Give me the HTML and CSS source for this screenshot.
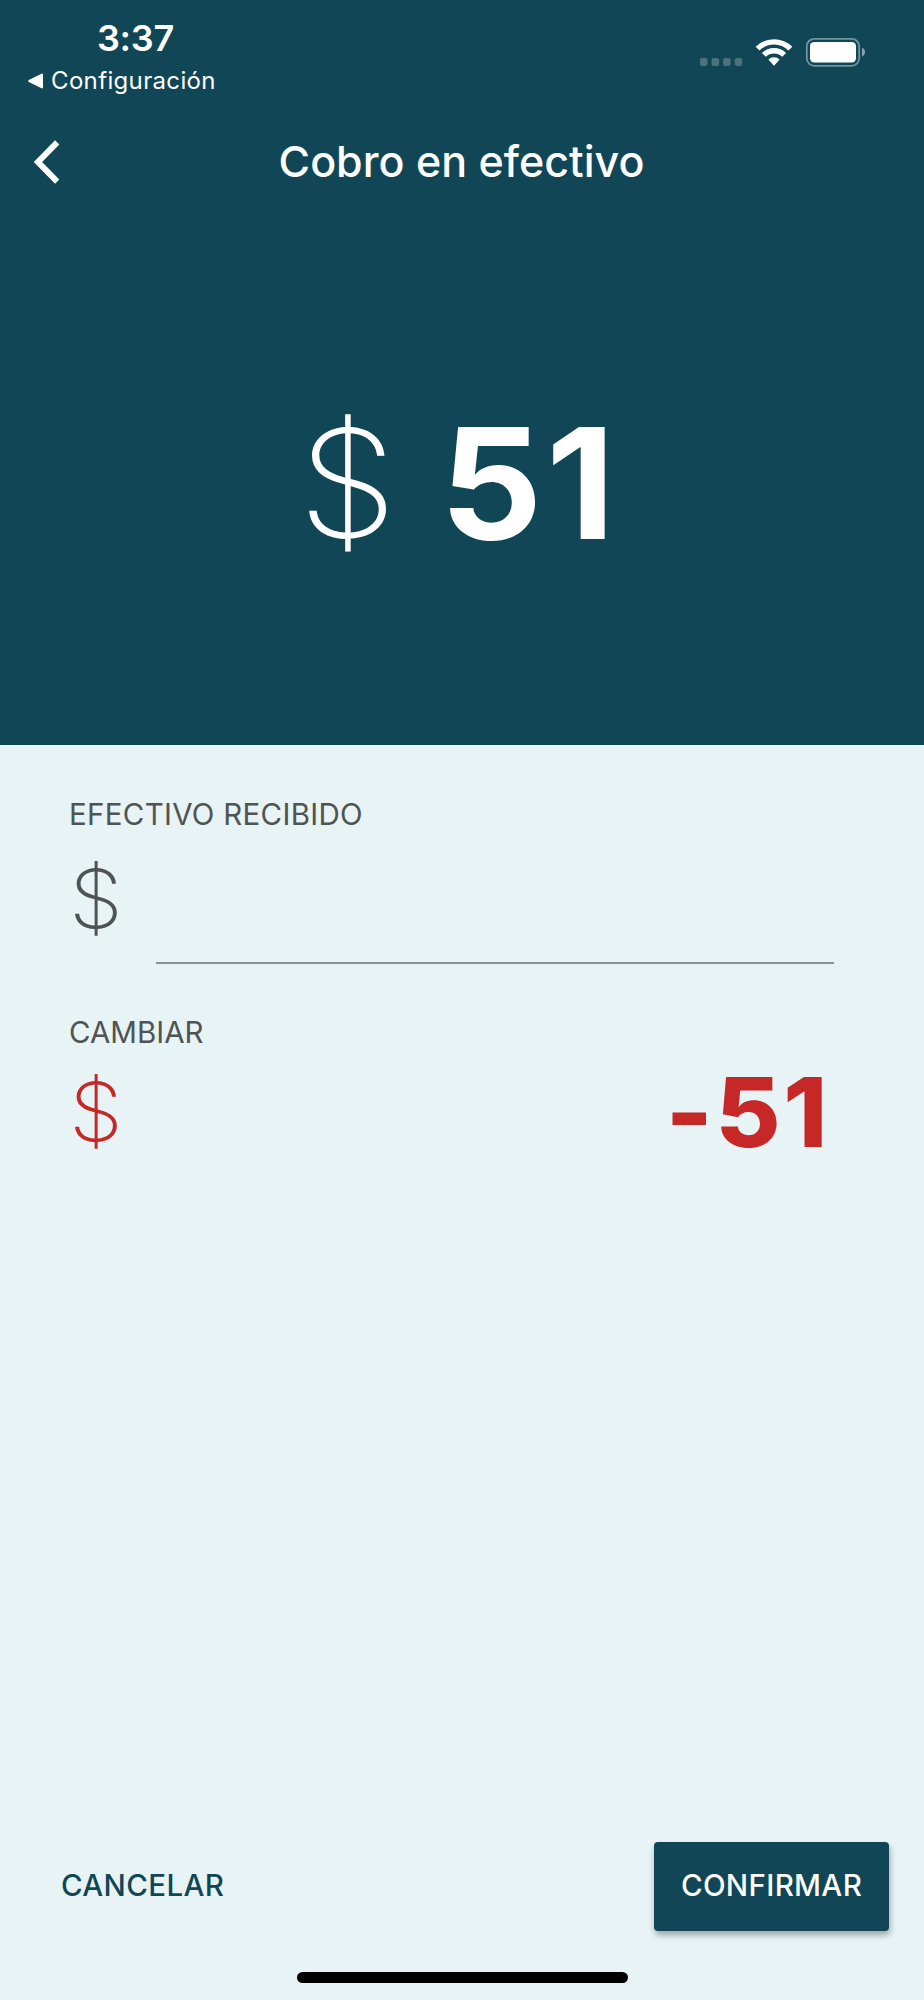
FILE: index.html
```html
<!DOCTYPE html>
<html lang="es">
<head>
  <meta charset="UTF-8" />
  <title>Cobro en efectivo</title>
  <link rel="stylesheet" href="styles.css">
</head>
<body>

<header>
  <div class="status-bar">
    <div class="status-left">
      <span class="time">3:37</span>
      <a class="back-app" href="#">
        <svg width="16" height="16" viewBox="0 0 16 16"><path d="M1.2 8 L14 1.6 V14.4 Z" fill="#fff" stroke="#fff" stroke-width="2" stroke-linejoin="round"/></svg>
        Configuración
      </a>
    </div>
    <!-- signal, wifi, battery -->
    <svg class="status-icons" width="166" height="30" viewBox="700 37 166 30">
      <g fill="#fff" fill-opacity="0.24">
        <rect x="700" y="58" width="7.5" height="8" rx="2.2"/>
        <rect x="711.6" y="58" width="7.5" height="8" rx="2.2"/>
        <rect x="723.1" y="58" width="7.5" height="8" rx="2.2"/>
        <rect x="734.7" y="58" width="7.5" height="8" rx="2.2"/>
      </g>
      <g fill="none" stroke="#fff" stroke-width="5.4">
        <path d="M757.6 48.7 A23 23 0 0 1 790.4 48.7"/>
        <path d="M763.8 54.9 A14.5 14.5 0 0 1 784.2 54.9"/>
      </g>
      <path d="M768.4 59.6 A8 8 0 0 1 779.6 59.6 L774.8 64.9 Q774 65.9 773.2 64.9 Z" fill="#fff"/>
      <rect x="806.8" y="38.8" width="52.4" height="27" rx="7.5" fill="none" stroke="#fff" stroke-opacity="0.42" stroke-width="1.8"/>
      <rect x="810" y="42" width="46" height="20.4" rx="4.2" fill="#fff"/>
      <path d="M862 47.8 C866 49.4 866 55 862 56.6 Z" fill="#fff" fill-opacity="0.5"/>
    </svg>
  </div>

  <div class="app-bar">
    <a class="back" href="#">
      <svg width="28" height="44" viewBox="0 0 28 44"><path d="M23.2 2.4 L4 22 L23.2 41.6" fill="none" stroke="#fff" stroke-width="6"/></svg>
    </a>
    <h1>Cobro en efectivo</h1>
  </div>

  <div class="total">
    <span class="currency">$</span>
    <strong>51</strong>
  </div>
</header>

<main>
  <label for="received">EFECTIVO RECIBIDO</label>
  <div class="row received">
    <span class="currency">$</span>
    <input type="text" id="received">
  </div>

  <div class="label">CAMBIAR</div>
  <div class="row change">
    <span class="currency">$</span>
    <strong>-51</strong>
  </div>
</main>

<footer>
  <div class="actions">
    <button type="button" class="btn-cancel">CANCELAR</button>
    <button type="button" class="btn-confirm">CONFIRMAR</button>
  </div>
  <div class="home-bar"></div>
</footer>

</body>
</html>
```
FILE: styles.css
```css
* {
  box-sizing: border-box;
}
body {
  margin: 0;
  height: 2000px;
  display: flex;
  flex-direction: column;
  font-family: Inter, 'Liberation Sans', sans-serif;
  background: #e7f3f5;
}
header {
  height: 745px;
  background: #104655;
  color: white;
}
.status-bar {
  height: 106px;
  padding: 18px 58px 0 28px;
  display: flex;
  justify-content: space-between;
  align-items: flex-start;
}
.status-left {
  display: flex;
  flex-direction: column;
}
.time {
  font-size: 36px;
  line-height: 40px;
  font-weight: 600;
  letter-spacing: -0.3px;
  margin-left: 69px;
}
.back-app {
  display: flex;
  align-items: center;
  gap: 7px;
  margin-top: 8px;
  font-size: 24px;
  line-height: 30px;
  font-weight: 400;
  letter-spacing: 0.35px;
  color: white;
  text-decoration: none;
}
.status-icons {
  margin-top: 19px;
}
.app-bar {
  height: 111px;
  padding: 0 33px 0 34px;
  display: grid;
  grid-template-columns: 59px 1fr 61px;
  align-items: center;
}
.back {
  display: flex;
}
h1 {
  margin: 0;
  padding-bottom: 1px;
  font-size: 43px;
  line-height: 50px;
  font-weight: 500;
  text-align: center;
}
.currency {
  font-size: 81px;
  line-height: 80px;
  font-weight: 200;
  transform: scaleX(1.07);
  transform-origin: left;
}
.total {
  height: 528px;
  padding: 4px 0 0 298px;
  display: flex;
  align-items: center;
}
.total .currency {
  font-size: 149px;
  line-height: 160px;
}
.total strong {
  margin-left: 49px;
  font-size: 154px;
  line-height: 160px;
  font-weight: 700;
  letter-spacing: 3.5px;
  transform: scaleX(1.04);
  transform-origin: left;
}
main {
  flex: 1;
  padding: 49px 90px 0 69px;
}
label,
.label {
  display: block;
  font-size: 29.5px;
  line-height: 40px;
  color: #4f5453;
}
label {
  letter-spacing: 0.3px;
}
.row {
  display: flex;
  justify-content: space-between;
}
.received {
  height: 130px;
  margin-bottom: 48px;
  color: #4f5453;
}
.received .currency {
  margin-top: 25px;
}
.received input {
  width: 678px;
  padding: 0;
  border: none;
  border-bottom: 2px solid #849291;
  background: transparent;
  font: 700 76px Inter, sans-serif;
  text-align: right;
  outline: none;
}
.change {
  height: 120px;
  align-items: center;
  color: #c62828;
}
.change strong {
  font-size: 96px;
  line-height: 100px;
  font-weight: 800;
  letter-spacing: 2.6px;
  transform: scaleX(1.04);
  transform-origin: right;
  margin-right: 4px;
}
.actions {
  display: flex;
  justify-content: space-between;
  padding: 0 35px;
}
.actions button {
  height: 89px;
  border: none;
  border-radius: 4px;
  font: 500 29.5px Inter, 'Liberation Sans', sans-serif;
  letter-spacing: 0.35px;
}
.btn-cancel {
  padding: 0 26px 3px;
  background: transparent;
  color: #104655;
}
.btn-confirm {
  width: 235px;
  padding: 0 0 3px;
  background: #104655;
  color: white;
  box-shadow: 1px 4px 6px rgba(0, 0, 0, 0.32);
}
.home-bar {
  width: 331px;
  height: 11px;
  margin: 41px auto 17px;
  border-radius: 6px;
  background: black;
}
```
